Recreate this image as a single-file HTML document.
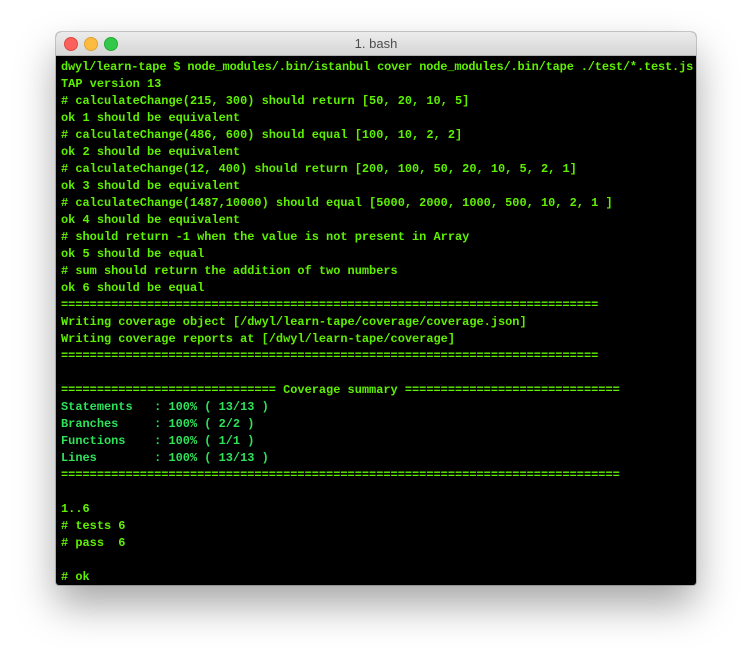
<!DOCTYPE html>
<html><head><style>
html,body{margin:0;padding:0;background:#fff;width:752px;height:666px;overflow:hidden}
.win{position:absolute;left:56px;top:32px;width:640px;height:553px;border-radius:5px 5px 3px 3px;background:#000;overflow:hidden;box-shadow:0 20px 40px rgba(0,0,0,0.35),0 0 0 1px rgba(0,0,0,0.2)}
.tb{height:23px;background:linear-gradient(#ececec,#d6d6d6);border-bottom:1px solid #b4b4b4;position:relative;font:13px "Liberation Sans",sans-serif;color:#4d4d4d;text-align:center;line-height:23px}
.d{position:absolute;top:5px;width:12px;height:12px;border-radius:50%}
pre{margin:0;position:absolute;left:5px;top:27px;font:bold 11.95px/17px "Liberation Mono",monospace;color:#5ff000;letter-spacing:0}
.c{color:#2ee25a}
</style></head><body>
<div class="win">
<div class="tb"><div class="d" style="left:8px;background:#fc605c;border:0.5px solid #de4a43"></div><div class="d" style="left:28px;background:#fdbc40;border:0.5px solid #dea236"></div><div class="d" style="left:48px;background:#34c84a;border:0.5px solid #27aa35"></div>1. bash</div>
<pre><span style="letter-spacing:-0.14px">dwyl/learn-tape $ node_modules/.bin/istanbul cover node_modules/.bin/tape ./test/*.test.js</span>
TAP version 13
# calculateChange(215, 300) should return [50, 20, 10, 5]
ok 1 should be equivalent
# calculateChange(486, 600) should equal [100, 10, 2, 2]
ok 2 should be equivalent
# calculateChange(12, 400) should return [200, 100, 50, 20, 10, 5, 2, 1]
ok 3 should be equivalent
# calculateChange(1487,10000) should equal [5000, 2000, 1000, 500, 10, 2, 1 ]
ok 4 should be equivalent
# should return -1 when the value is not present in Array
ok 5 should be equal
# sum should return the addition of two numbers
ok 6 should be equal
===========================================================================
Writing coverage object [/dwyl/learn-tape/coverage/coverage.json]
Writing coverage reports at [/dwyl/learn-tape/coverage]
===========================================================================

============================== Coverage summary ==============================
<span class="c">Statements   : 100% ( 13/13 )
Branches     : 100% ( 2/2 )
Functions    : 100% ( 1/1 )
Lines        : 100% ( 13/13 )</span>
==============================================================================

1..6
# tests 6
# pass  6

# ok</pre>
</div>
</body></html>
